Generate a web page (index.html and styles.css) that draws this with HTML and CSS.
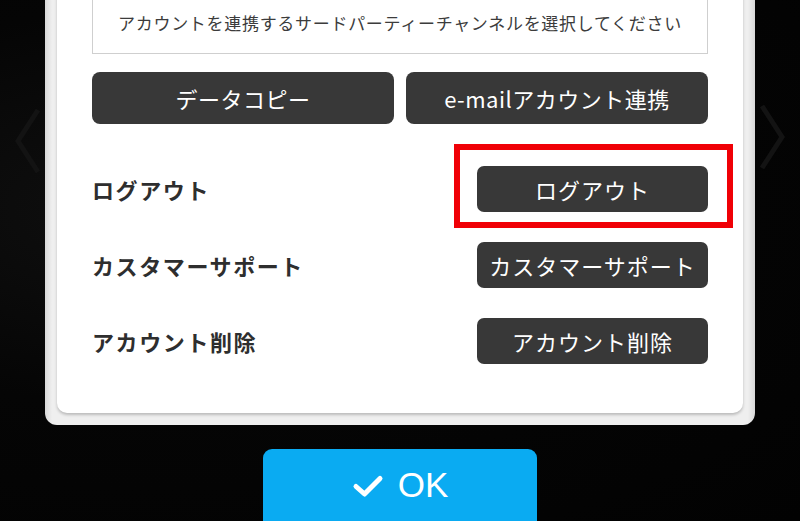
FILE: index.html
```html
<!DOCTYPE html>
<html lang="ja">
<head>
<meta charset="utf-8">
<title>アカウント設定</title>
<link rel="stylesheet" href="styles.css">
</head>
<body>
<div class="stage">
  <svg class="chev chev-left" width="30" height="70" viewBox="0 0 30 70"><path d="M26 4 L6 35 L26 66" fill="none" stroke="#131313" stroke-width="5"/></svg>
  <svg class="chev chev-right" width="30" height="70" viewBox="0 0 30 70"><path d="M4 4 L24 35 L4 66" fill="none" stroke="#131313" stroke-width="5"/></svg>

  <div class="frame">
    <div class="panel">
      <div class="notice">アカウントを連携するサードパーティーチャンネルを選択してください</div>
      <div class="btn-pair">
        <button class="btn btn-wide">データコピー</button>
        <button class="btn btn-wide">e-mailアカウント連携</button>
      </div>
      <div class="rows">
        <div class="row">
          <span class="label">ログアウト</span>
          <div class="btn-wrap">
            <button class="btn btn-row">ログアウト</button>
            <div class="highlight"></div>
          </div>
        </div>
        <div class="row">
          <span class="label">カスタマーサポート</span>
          <button class="btn btn-row">カスタマーサポート</button>
        </div>
        <div class="row">
          <span class="label">アカウント削除</span>
          <button class="btn btn-row">アカウント削除</button>
        </div>
      </div>
    </div>
  </div>

  <button class="ok">
    <svg class="check" width="32" height="24" viewBox="0 0 32 24"><path d="M4 12.5 L12.5 20 L28 4.5" fill="none" stroke="#fff" stroke-width="5" stroke-linecap="round" stroke-linejoin="round"/></svg>
    <span>OK</span>
  </button>
</div>
</body>
</html>
```

FILE: styles.css
```css
html, body {
  margin: 0;
  padding: 0;
}
body {
  width: 800px;
  height: 521px;
  overflow: hidden;
  background: #040404;
  font-family: "Noto Sans CJK JP", "Noto Sans", sans-serif;
}
.stage {
  position: relative;
  width: 800px;
  height: 521px;
  display: flex;
  flex-direction: column;
  align-items: center;
  background: radial-gradient(ellipse at 20% 40%, #101010 0%, #050505 45%, #020202 100%);
}
.chev {
  position: absolute;
}
.chev-left { left: 12px; top: 106px; }
.chev-right { left: 758px; top: 102px; }

.frame {
  width: 686px;
  margin-top: -30px;
  padding: 0 12px 12px;
  background: linear-gradient(90deg, #d9d9d9 0%, #efefef 1%, #efefef 99%, #d9d9d9 100%);
  border-radius: 0 0 12px 12px;
  position: relative;
}
.panel {
  background: #ffffff;
  border-radius: 0 0 10px 10px;
  padding: 18px 35px 49px;
  box-shadow: 0 2px 3px rgba(0, 0, 0, 0.22);
}
.notice {
  height: 62px;
  border: 1px solid #cfcfcf;
  display: flex;
  align-items: center;
  justify-content: center;
  padding-top: 2px;
  box-sizing: content-box;
  font-size: 17px;
  letter-spacing: 0.7px;
  color: #3c3c3c;
  white-space: nowrap;
}
.btn {
  border: none;
  background: #383838;
  color: #fff;
  font-family: "Noto Sans CJK JP", "Noto Sans", sans-serif;
  white-space: nowrap;
  padding: 0;
  display: flex;
  align-items: center;
  justify-content: center;
}
.btn-pair {
  margin-top: 18px;
  display: flex;
  gap: 12px;
}
.btn-wide {
  flex: 1;
  height: 52px;
  border-radius: 8px;
  font-size: 22px;
  letter-spacing: 0.5px;
}
.rows {
  margin-top: 42px;
  display: flex;
  flex-direction: column;
  gap: 30px;
}
.row {
  display: flex;
  align-items: center;
  justify-content: space-between;
  height: 46px;
}
.label {
  font-size: 22px;
  font-weight: 700;
  color: #2e2e2e;
  letter-spacing: 1.6px;
}
.btn-wrap {
  position: relative;
}
.btn-row {
  width: 231px;
  height: 46px;
  border-radius: 7px;
  font-size: 22px;
  letter-spacing: 1px;
}
.highlight {
  position: absolute;
  left: -23px;
  top: -22px;
  right: -25px;
  bottom: -16px;
  border: 6px solid #f00006;
  pointer-events: none;
}
.ok {
  margin-top: 24px;
  width: 274px;
  height: 80px;
  flex: none;
  border: none;
  border-radius: 9px;
  background: #0aabf2;
  color: #fff;
  display: flex;
  align-items: flex-start;
  justify-content: center;
  gap: 14px;
  padding-top: 16px;
  font-family: "Liberation Sans", Arial, sans-serif;
  font-size: 35px;
  line-height: 40px;
}
.check {
  margin-top: 9px;
}
```
